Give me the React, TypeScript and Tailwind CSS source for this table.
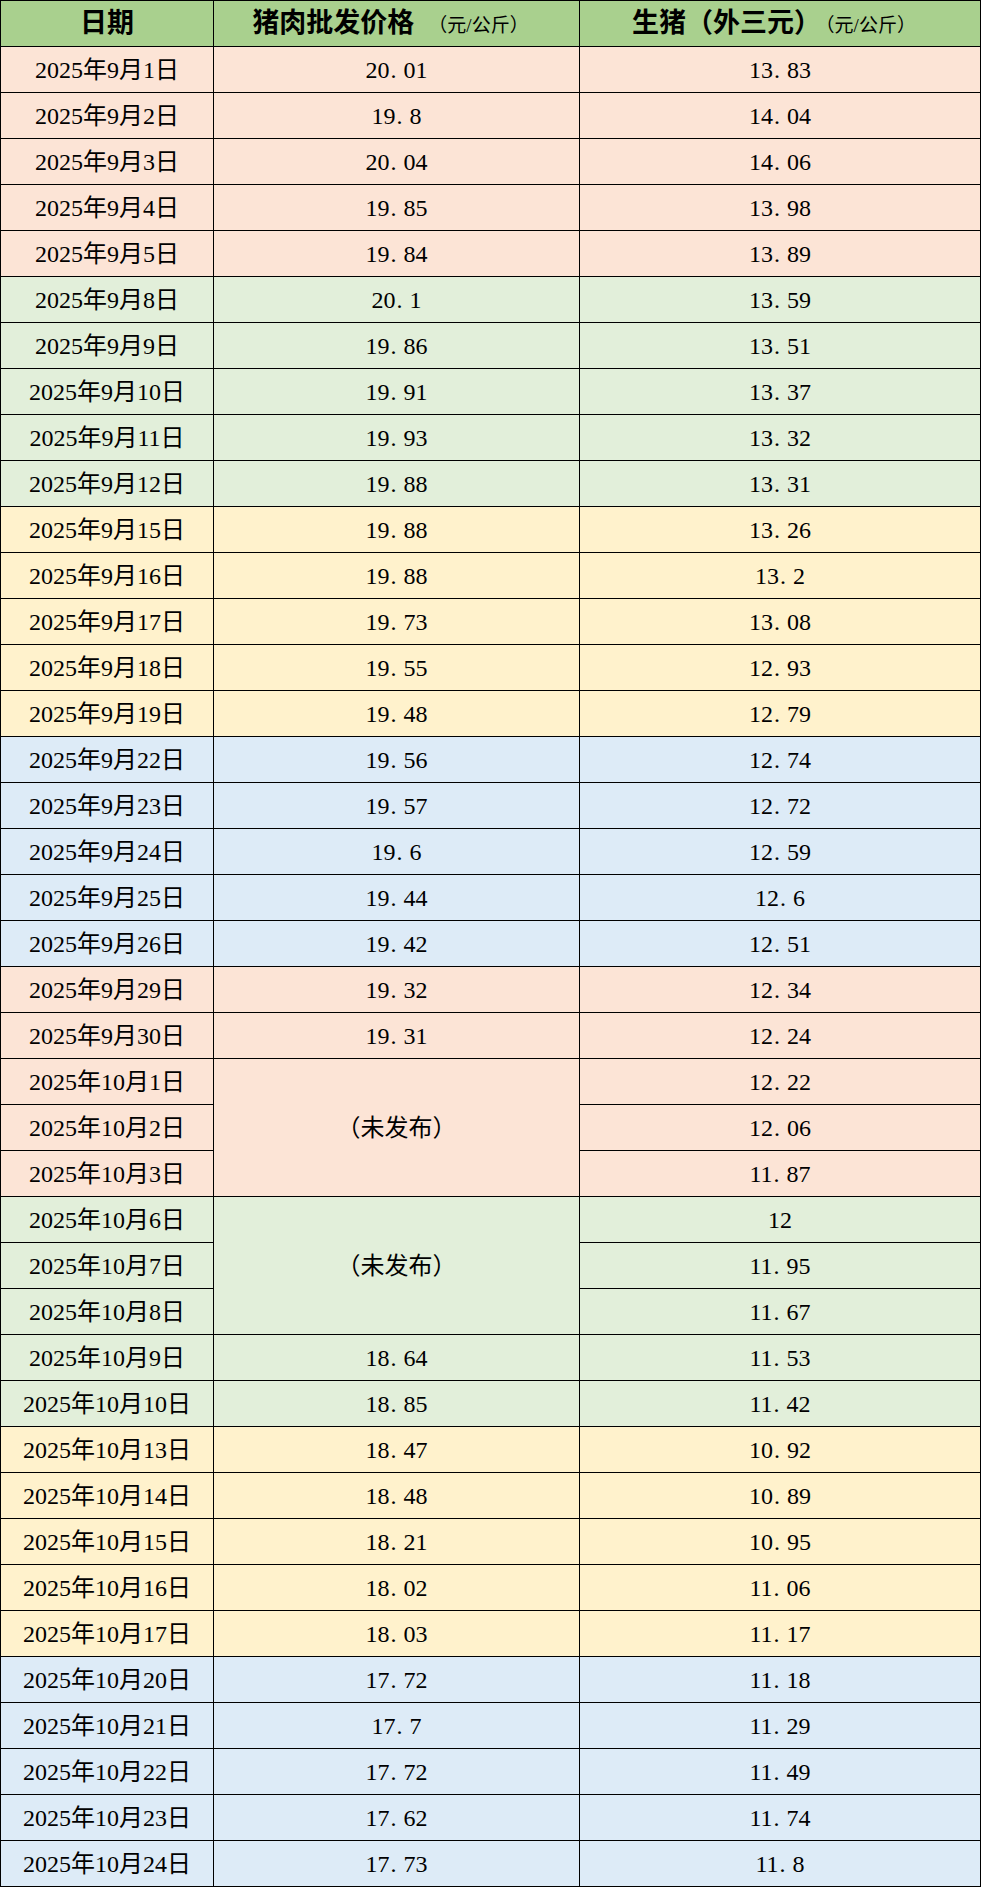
import React from "react";

type Row = { d: string; p: string | null; h: string; c: string; span?: number; skip?: boolean };

const PINK = "bg-[#fce4d6]";
const GREEN = "bg-[#e2efda]";
const YELLOW = "bg-[#fff2cc]";
const BLUE = "bg-[#ddebf7]";

const rows: Row[] = [
  { d: "2025年9月1日", p: "20.01", h: "13.83", c: PINK },
  { d: "2025年9月2日", p: "19.8", h: "14.04", c: PINK },
  { d: "2025年9月3日", p: "20.04", h: "14.06", c: PINK },
  { d: "2025年9月4日", p: "19.85", h: "13.98", c: PINK },
  { d: "2025年9月5日", p: "19.84", h: "13.89", c: PINK },
  { d: "2025年9月8日", p: "20.1", h: "13.59", c: GREEN },
  { d: "2025年9月9日", p: "19.86", h: "13.51", c: GREEN },
  { d: "2025年9月10日", p: "19.91", h: "13.37", c: GREEN },
  { d: "2025年9月11日", p: "19.93", h: "13.32", c: GREEN },
  { d: "2025年9月12日", p: "19.88", h: "13.31", c: GREEN },
  { d: "2025年9月15日", p: "19.88", h: "13.26", c: YELLOW },
  { d: "2025年9月16日", p: "19.88", h: "13.2", c: YELLOW },
  { d: "2025年9月17日", p: "19.73", h: "13.08", c: YELLOW },
  { d: "2025年9月18日", p: "19.55", h: "12.93", c: YELLOW },
  { d: "2025年9月19日", p: "19.48", h: "12.79", c: YELLOW },
  { d: "2025年9月22日", p: "19.56", h: "12.74", c: BLUE },
  { d: "2025年9月23日", p: "19.57", h: "12.72", c: BLUE },
  { d: "2025年9月24日", p: "19.6", h: "12.59", c: BLUE },
  { d: "2025年9月25日", p: "19.44", h: "12.6", c: BLUE },
  { d: "2025年9月26日", p: "19.42", h: "12.51", c: BLUE },
  { d: "2025年9月29日", p: "19.32", h: "12.34", c: PINK },
  { d: "2025年9月30日", p: "19.31", h: "12.24", c: PINK },
  { d: "2025年10月1日", p: "（未发布）", h: "12.22", c: PINK, span: 3 },
  { d: "2025年10月2日", p: null, h: "12.06", c: PINK, skip: true },
  { d: "2025年10月3日", p: null, h: "11.87", c: PINK, skip: true },
  { d: "2025年10月6日", p: "（未发布）", h: "12", c: GREEN, span: 3 },
  { d: "2025年10月7日", p: null, h: "11.95", c: GREEN, skip: true },
  { d: "2025年10月8日", p: null, h: "11.67", c: GREEN, skip: true },
  { d: "2025年10月9日", p: "18.64", h: "11.53", c: GREEN },
  { d: "2025年10月10日", p: "18.85", h: "11.42", c: GREEN },
  { d: "2025年10月13日", p: "18.47", h: "10.92", c: YELLOW },
  { d: "2025年10月14日", p: "18.48", h: "10.89", c: YELLOW },
  { d: "2025年10月15日", p: "18.21", h: "10.95", c: YELLOW },
  { d: "2025年10月16日", p: "18.02", h: "11.06", c: YELLOW },
  { d: "2025年10月17日", p: "18.03", h: "11.17", c: YELLOW },
  { d: "2025年10月20日", p: "17.72", h: "11.18", c: BLUE },
  { d: "2025年10月21日", p: "17.7", h: "11.29", c: BLUE },
  { d: "2025年10月22日", p: "17.72", h: "11.49", c: BLUE },
  { d: "2025年10月23日", p: "17.62", h: "11.74", c: BLUE },
  { d: "2025年10月24日", p: "17.73", h: "11.8", c: BLUE },
];

const cell = "border border-black text-center align-middle p-0 leading-none";

function Num({ v }: { v: string }) {
  const i = v.indexOf(".");
  if (i < 0) return <span>{v}</span>;
  return (
    <span>
      {v.slice(0, i)}
      <span className="ml-[1px] mr-[7px]">.</span>
      {v.slice(i + 1)}
    </span>
  );
}

export default function App() {
  return (
    <div className="w-[981px] bg-white" style={{ fontFamily: '"Liberation Serif", "Noto Sans CJK SC", serif' }}>
      <table className="table-fixed border-collapse w-[980px] text-[24px] text-black">
        <colgroup>
          <col className="w-[213px]" />
          <col className="w-[366px]" />
          <col className="w-[401px]" />
        </colgroup>
        <thead>
          <tr className="h-[46px] bg-[#a9d08e]">
            <th className={`${cell} text-[27px] font-bold`}>日期</th>
            <th className={`${cell} text-[27px] font-bold`}>
              <span className="relative left-[-6px]">
                猪肉批发价格
                <span className="text-[19px] font-normal ml-[14px]">（元/公斤）</span>
              </span>
            </th>
            <th className={`${cell} text-[27px] font-bold`}>
              <span className="relative left-[-6px]">
                生猪（外三元）
                <span className="text-[19px] font-normal ml-[4px]">（元/公斤）</span>
              </span>
            </th>
          </tr>
        </thead>
        <tbody>
          {rows.map((r) => (
            <tr key={r.d} className={`h-[46px] ${r.c}`}>
              <td className={cell}>{r.d}</td>
              {!r.skip && (
                <td className={cell} rowSpan={r.span ?? 1}>
                  {r.p && r.p.startsWith("（") ? r.p : <Num v={r.p ?? ""} />}
                </td>
              )}
              <td className={cell}>
                <Num v={r.h} />
              </td>
            </tr>
          ))}
        </tbody>
      </table>
    </div>
  );
}
